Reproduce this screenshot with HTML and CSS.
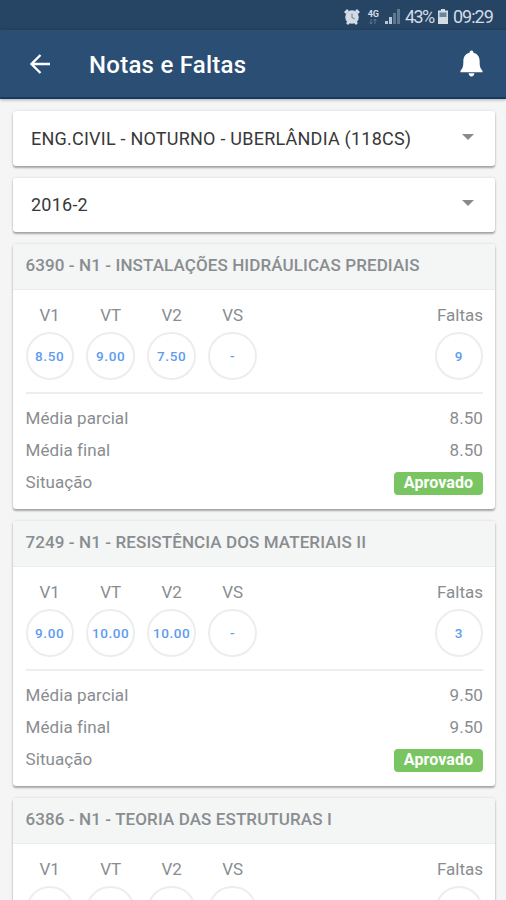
FILE: index.html
```html
<!DOCTYPE html>
<html lang="pt-BR">
<head>
<meta charset="UTF-8" />
<title>Notas e Faltas</title>
<link rel="stylesheet" href="styles.css">
</head>
<body>
  <div class="status">
    <svg class="alarm" width="16" height="16" viewBox="0 0 16 16">
      <path d="M1 4 L4 1 M15 4 L12 1 M3 15 L5 13 M13 15 L11 13" stroke="#d3dce5" stroke-width="2.800" />
      <circle cx="8" cy="8" r="6.800" fill="#d3dce5" />
      <path d="M8 4.500 V8.400 L10.600 10" fill="none" stroke="#7d92a8" stroke-width="1.300" />
    </svg>
    <div class="net">
      <span>4G</span>
      <svg width="10" height="5" viewBox="0 0 10 5">
        <path d="M3 0 V5 M1.500 3 L3 5 L4.500 3 M7 5 V0 M5.500 2 L7 0 L8.500 2" fill="none" stroke="#5a738d" stroke-width="1" />
      </svg>
    </div>
    <svg class="signal" width="15" height="15" viewBox="0 0 15 15">
      <rect x="0" y="12" width="3" height="3" fill="#b9c6d3" />
      <rect x="4" y="8" width="3" height="7" fill="#b9c6d3" />
      <rect x="8" y="4" width="3" height="11" fill="#5f7891" />
      <rect x="12" y="0" width="3" height="15" fill="#5f7891" />
    </svg>
    <span class="percent">43%</span>
    <svg class="battery" width="10" height="15" viewBox="0 0 10 15">
      <path d="M3 0 H7 V1.500 H10 V15 H0 V1.500 H3 Z" fill="#d3dce5" />
      <rect x="1.500" y="3.500" width="7" height="4.500" fill="#6b839c" />
    </svg>
    <span class="time">09:29</span>
  </div>

  <div class="toolbar">
    <svg class="back" width="20" height="20" viewBox="0 0 20 20">
      <path d="M20 10 H1.500 M10.500 1 L1.500 10 L10.500 19" fill="none" stroke="#fff" stroke-width="2.300" />
    </svg>
    <h1>Notas e Faltas</h1>
    <svg class="bell" width="23" height="27" viewBox="0 0 24 28">
      <path d="M12 0.500 C13.300 0.500 14 1.400 14 2.700 C18.300 3.700 20.500 7 20.500 11.500 C20.500 17 21 19 23.500 21.500 V23.200 H0.500 V21.500 C3 19 3.500 17 3.500 11.500 C3.500 7 5.700 3.700 10 2.700 C10 1.400 10.700 0.500 12 0.500 Z" fill="#fff" />
      <path d="M9 24.200 H15 C15 26.200 13.600 27.500 12 27.500 C10.400 27.500 9 26.200 9 24.200 Z" fill="#fff" />
    </svg>
  </div>

  <div class="content">
    <div class="select"><span>ENG.CIVIL - NOTURNO - UBERLÂNDIA (118CS)</span><i class="arrow"></i></div>
    <div class="select"><span>2016-2</span><i class="arrow"></i></div>

    <div class="card">
      <h2>6390 - N1 - INSTALAÇÕES HIDRÁULICAS PREDIAIS</h2>
      <div class="body">
        <div class="grades">
          <div class="grade"><label>V1</label><b>8.50</b></div>
          <div class="grade"><label>VT</label><b>9.00</b></div>
          <div class="grade"><label>V2</label><b>7.50</b></div>
          <div class="grade"><label>VS</label><b>-</b></div>
          <div class="grade absences"><label>Faltas</label><b>9</b></div>
        </div>
        <div class="row"><span>Média parcial</span><span>8.50</span></div>
        <div class="row"><span>Média final</span><span>8.50</span></div>
        <div class="row"><span>Situação</span><span class="badge">Aprovado</span></div>
      </div>
    </div>

    <div class="card">
      <h2>7249 - N1 - RESISTÊNCIA DOS MATERIAIS II</h2>
      <div class="body">
        <div class="grades">
          <div class="grade"><label>V1</label><b>9.00</b></div>
          <div class="grade"><label>VT</label><b>10.00</b></div>
          <div class="grade"><label>V2</label><b>10.00</b></div>
          <div class="grade"><label>VS</label><b>-</b></div>
          <div class="grade absences"><label>Faltas</label><b>3</b></div>
        </div>
        <div class="row"><span>Média parcial</span><span>9.50</span></div>
        <div class="row"><span>Média final</span><span>9.50</span></div>
        <div class="row"><span>Situação</span><span class="badge">Aprovado</span></div>
      </div>
    </div>

    <div class="card">
      <h2>6386 - N1 - TEORIA DAS ESTRUTURAS I</h2>
      <div class="body">
        <div class="grades">
          <div class="grade"><label>V1</label><b></b></div>
          <div class="grade"><label>VT</label><b></b></div>
          <div class="grade"><label>V2</label><b></b></div>
          <div class="grade"><label>VS</label><b></b></div>
          <div class="grade absences"><label>Faltas</label><b></b></div>
        </div>
      </div>
    </div>
  </div>
</body>
</html>
```
FILE: styles.css
```css
*{
  box-sizing: border-box;
}
body{
  margin: 0;
  height: 900px;
  overflow: hidden;
  background-color: #f5f5f5;
  font-family: Roboto, sans-serif;
  color: #898d90;
}

.status{
  display: flex;
  align-items: center;
  justify-content: flex-end;
  height: 30px;
  padding: 3px 12px 0 0;
  background-color: #264463;
  color: #d3dce5;
  font-size: 18px;
}
.alarm{
  margin-right: 8px;
}
.net{
  display: flex;
  flex-direction: column;
  align-items: center;
  margin-right: 6px;
  font-size: 9px;
  font-weight: bold;
  line-height: 9px;
}
.signal{
  margin-right: 5px;
}
.percent{
  width: 30px;
  letter-spacing: -1.6px;
}
.battery{
  margin: 0 5px 0 3px;
}
.time{
  width: 41px;
  letter-spacing: -1px;
}

.toolbar{
  display: flex;
  align-items: center;
  height: 69px;
  padding: 0 23px 0 30px;
  background-color: #2b4f74;
  border-bottom: 2px solid #173a62;
  box-shadow: 0 1px 3px rgba(0,0,0,.3);
}
.back{
  margin-top: 1px;
}
h1{
  flex: 1;
  margin: 2px 0 0 39px;
  color: white;
  font-size: 24px;
  font-weight: 500;
  letter-spacing: 0.25px;
}
.bell{
  margin-bottom: 1px;
}

.content{
  display: flex;
  flex-direction: column;
  gap: 12px;
  padding: 12px 11px 0 13px;
}
.select, .card{
  flex: none;
  background-color: white;
  border-radius: 3px;
  box-shadow: 0 2px 2px rgba(0,0,0,.3), 0 0 3px rgba(0,0,0,.12);
}
.select{
  display: flex;
  align-items: center;
  justify-content: space-between;
  height: 54.5px;
  padding: 0 21px 0 18px;
  color: #383838;
  font-size: 18px;
  letter-spacing: 0.23px;
}
.arrow{
  border: 6px solid transparent;
  border-top-color: #8a8a8a;
  border-bottom-width: 0;
  margin-bottom: 3px;
}

.card{
  height: 265px;
}
h2{
  height: 46px;
  margin: 0;
  padding-left: 12.5px;
  background-color: #f4f5f5;
  border-bottom: 1px solid #ebeeee;
  border-radius: 3px 3px 0 0;
  font-size: 17px;
  font-weight: 500;
  letter-spacing: 0.1px;
  line-height: 43px;
}
.body{
  padding: 14px 12px 0 12.5px;
}
.grades{
  display: flex;
  gap: 12.7px;
  height: 90px;
  margin-bottom: 7.5px;
  border-bottom: 2px solid #eee;
}
.grade{
  display: flex;
  flex-direction: column;
  align-items: center;
  width: 48.3px;
  font-size: 17px;
}
.grade label{
  height: 28px;
  line-height: 22px;
}
.grade b{
  width: 48.3px;
  height: 48.3px;
  border: 2px solid #ededed;
  border-radius: 50%;
  color: #5d9bef;
  font-size: 13.5px;
  font-weight: 500;
  letter-spacing: 0.6px;
  line-height: 44px;
  text-align: center;
}
.absences{
  align-items: flex-end;
  margin-left: auto;
}
.row{
  display: flex;
  align-items: center;
  justify-content: space-between;
  height: 32px;
  font-size: 17px;
  letter-spacing: 0.08px;
}
.badge{
  width: 89px;
  height: 23px;
  margin-top: 3px;
  background-color: #79c562;
  border-radius: 4px;
  color: white;
  font-size: 16px;
  font-weight: bold;
  line-height: 22px;
  text-align: center;
}
```
